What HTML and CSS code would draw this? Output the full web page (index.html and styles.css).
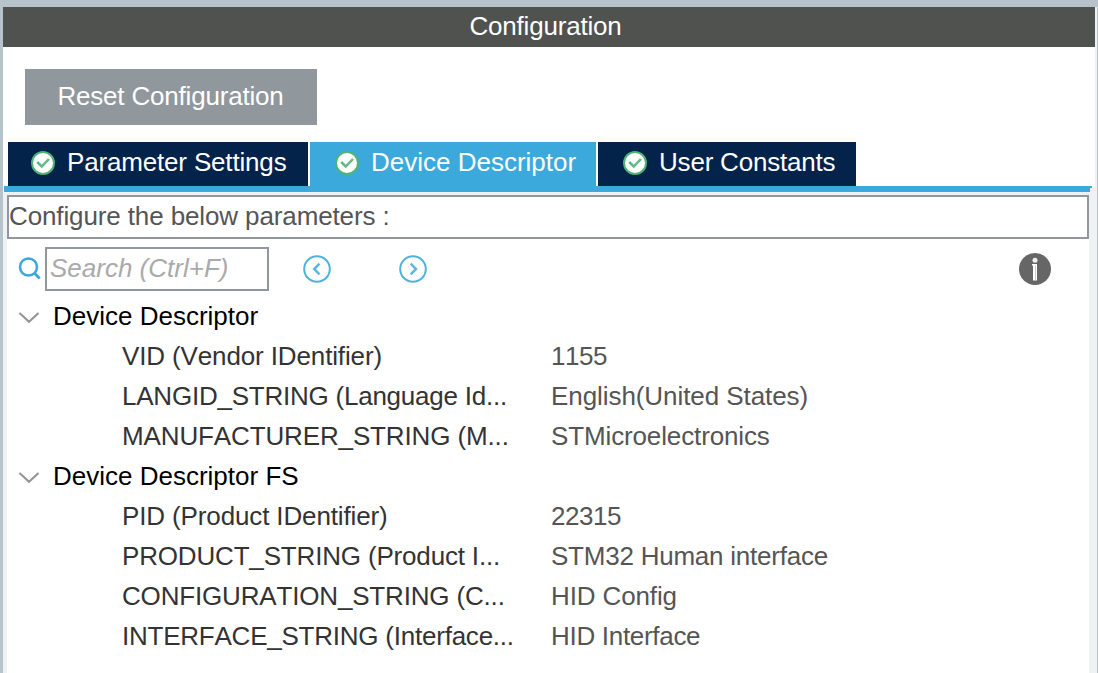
FILE: index.html
```html
<!DOCTYPE html>
<html lang="en">
<head>
<meta charset="utf-8">
<title>Configuration</title>
<link rel="stylesheet" href="styles.css">
</head>
<body>
<svg class="defs" width="0" height="0">
  <symbol id="check" viewBox="0 0 24 24">
    <circle cx="12" cy="12" r="11" fill="#fff" stroke="#4fb376" stroke-width="2"/>
    <path d="M6.200 11l4.500 4.500L18 8" fill="none" stroke="#5fba83" stroke-width="2.500"/>
  </symbol>
  <symbol id="chevron" viewBox="0 0 22 14">
    <path d="M1.500 2l9.500 8.700L20.500 2" fill="none" stroke="#959595" stroke-width="2.200"/>
  </symbol>
</svg>
<div class="window">
  <header class="title">Configuration</header>
  <div class="toolbar"><button class="reset">Reset Configuration</button></div>
  <nav class="tabs">
    <div class="tab tab-parameters"><svg class="check"><use href="#check"/></svg>Parameter Settings</div>
    <div class="tab tab-device active"><svg class="check"><use href="#check"/></svg>Device Descriptor</div>
    <div class="tab tab-user"><svg class="check"><use href="#check"/></svg>User Constants</div>
  </nav>
  <div class="tab-line"></div>
  <main class="panel">
    <div class="hint">Configure the below parameters :</div>
    <div class="content">
      <div class="search-row">
        <svg class="magnifier" viewBox="0 0 24 24"><circle cx="10.500" cy="10" r="8.500" fill="none" stroke="#3ba8dc" stroke-width="2.500"/><path d="M16.200 16l5.500 5.500" stroke="#3ba8dc" stroke-width="2.800"/></svg>
        <div class="search">Search (Ctrl+F)</div>
        <svg class="arrow" viewBox="0 0 28 28"><circle cx="14" cy="14" r="12.800" fill="none" stroke="#51b1df" stroke-width="2"/><path d="M16.500 8.700L11.200 14l5.300 5.300" fill="none" stroke="#5cb6e1" stroke-width="2.500"/></svg>
        <svg class="arrow" viewBox="0 0 28 28"><circle cx="14" cy="14" r="12.800" fill="none" stroke="#51b1df" stroke-width="2"/><path d="M11.700 8.700L17 14l-5.300 5.300" fill="none" stroke="#5cb6e1" stroke-width="2.500"/></svg>
        <svg class="info" viewBox="0 0 32 32"><circle cx="16" cy="16" r="16" fill="#666"/><circle cx="16" cy="7.300" r="2.500" fill="#eee"/><path d="M13 11h5v16.500h-4V12.500h-1z" fill="#fff"/><path d="M16.500 12.500v14.500" stroke="#ccc" stroke-width="1"/></svg>
      </div>
      <div class="group"><svg class="chevron"><use href="#chevron"/></svg>Device Descriptor</div>
      <div class="row"><span class="name snug">VID (Vendor IDentifier)</span><span class="value tightest">1155</span></div>
      <div class="row"><span class="name tight">LANGID_STRING (Language Id...</span><span class="value loose">English(United States)</span></div>
      <div class="row"><span class="name snug">MANUFACTURER_STRING (M...</span><span class="value snug">STMicroelectronics</span></div>
      <div class="group"><svg class="chevron"><use href="#chevron"/></svg>Device Descriptor FS</div>
      <div class="row"><span class="name snug">PID (Product IDentifier)</span><span class="value tightest">22315</span></div>
      <div class="row"><span class="name close">PRODUCT_STRING (Product I...</span><span class="value tight">STM32 Human interface</span></div>
      <div class="row"><span class="name close">CONFIGURATION_STRING (C...</span><span class="value snug">HID Config</span></div>
      <div class="row"><span class="name tight">INTERFACE_STRING (Interface...</span><span class="value tighter">HID Interface</span></div>
    </div>
  </main>
</div>
</body>
</html>
```
FILE: styles.css
```css
* { box-sizing: border-box; }
body {
  margin: 0;
  height: 673px;
  overflow: hidden;
  background: #b7c3ca;
  font: 26px/40px "Liberation Sans", Arial, sans-serif;
  font-kerning: none;
  white-space: nowrap;
}
.defs { display: block; height: 0; }
.window {
  height: 673px;
  display: flex;
  flex-direction: column;
  border-left: 3px solid #b7c3ca;
  border-right: 1px solid #b7c3ca;
  border-top: 7px solid #b7c3ca;
  background: linear-gradient(to left, #f0f1f3 2px, #fff 2px);
}
.title {
  height: 40px;
  margin-right: 2px;
  padding-right: 7px;
  line-height: 38px;
  letter-spacing: -.2px;
  text-align: center;
  color: #fff;
  background: #505250;
}
.toolbar { height: 95px; padding: 22px 0 0 22px; }
.reset {
  display: block;
  width: 292px;
  height: 56px;
  padding: 0 1px 2px 0;
  border: 0;
  color: #fff;
  background: #90979d;
  font: inherit;
  letter-spacing: -.19px;
}
.tabs { display: flex; gap: 2px; height: 44px; padding-left: 5px; }
.tab {
  display: flex;
  gap: 12px;
  height: 44px;
  padding-left: 23px;
  color: #fff;
  background: #03234b;
}
.tab-parameters { width: 300px; letter-spacing: -.17px; }
.tab-device { width: 286px; padding-left: 25px; }
.tab-user { width: 258px; padding-left: 25px; letter-spacing: -.2px; }
.active { background: #3ba9dc; }
.check { width: 24px; height: 24px; margin-top: 9px; }
.tab-line {
  height: 6px;
  margin: 0 0 0 1px;
  background:
    linear-gradient(#3ba9dc, #3ba9dc) 0 0 / calc(100% - 5px) 2px no-repeat,
    linear-gradient(#3ba9dc, #3ba9dc) 0 0 / calc(100% - 7px) 6px no-repeat,
    linear-gradient(#f0f1f3, #f0f1f3) 100% 100% / 7px 4px no-repeat;
}
.panel {
  flex: 1;
  display: flex;
  flex-direction: column;
  padding: 3px 8px 0 4px;
  background: #f0f1f3;
}
.hint {
  height: 44px;
  line-height: 38px;
  letter-spacing: -.12px;
  color: #555;
  border: 2px solid #90979d;
  background: #fff;
}
.content { flex: 1; padding-top: 8px; background: #fff; }
.search-row { display: flex; height: 49px; padding-left: 11px; }
.magnifier { width: 24px; height: 24px; margin: 10px 3px 0 0; }
.search {
  width: 224px;
  height: 44px;
  padding-left: 3px;
  line-height: 38px;
  font-style: italic;
  color: #aaa;
  border: 2px solid #90979d;
}
.arrow { width: 28px; height: 28px; margin: 8px 34px 0 34px; }
.info { width: 32px; height: 32px; margin: 6px 38px 0 auto; }
.group { display: flex; height: 40px; color: #000; }
.chevron { width: 22px; height: 14px; margin: 15px 13px 0 11px; }
.row { display: flex; height: 40px; padding-left: 115px; }
.name { width: 429px; color: #333; }
.value { color: #555; }
.loose { letter-spacing: -.07px; }
.snug { letter-spacing: -.13px; }
.close { letter-spacing: -.17px; }
.tight { letter-spacing: -.23px; }
.tighter { letter-spacing: -.3px; }
.tightest { letter-spacing: -.45px; }
```
